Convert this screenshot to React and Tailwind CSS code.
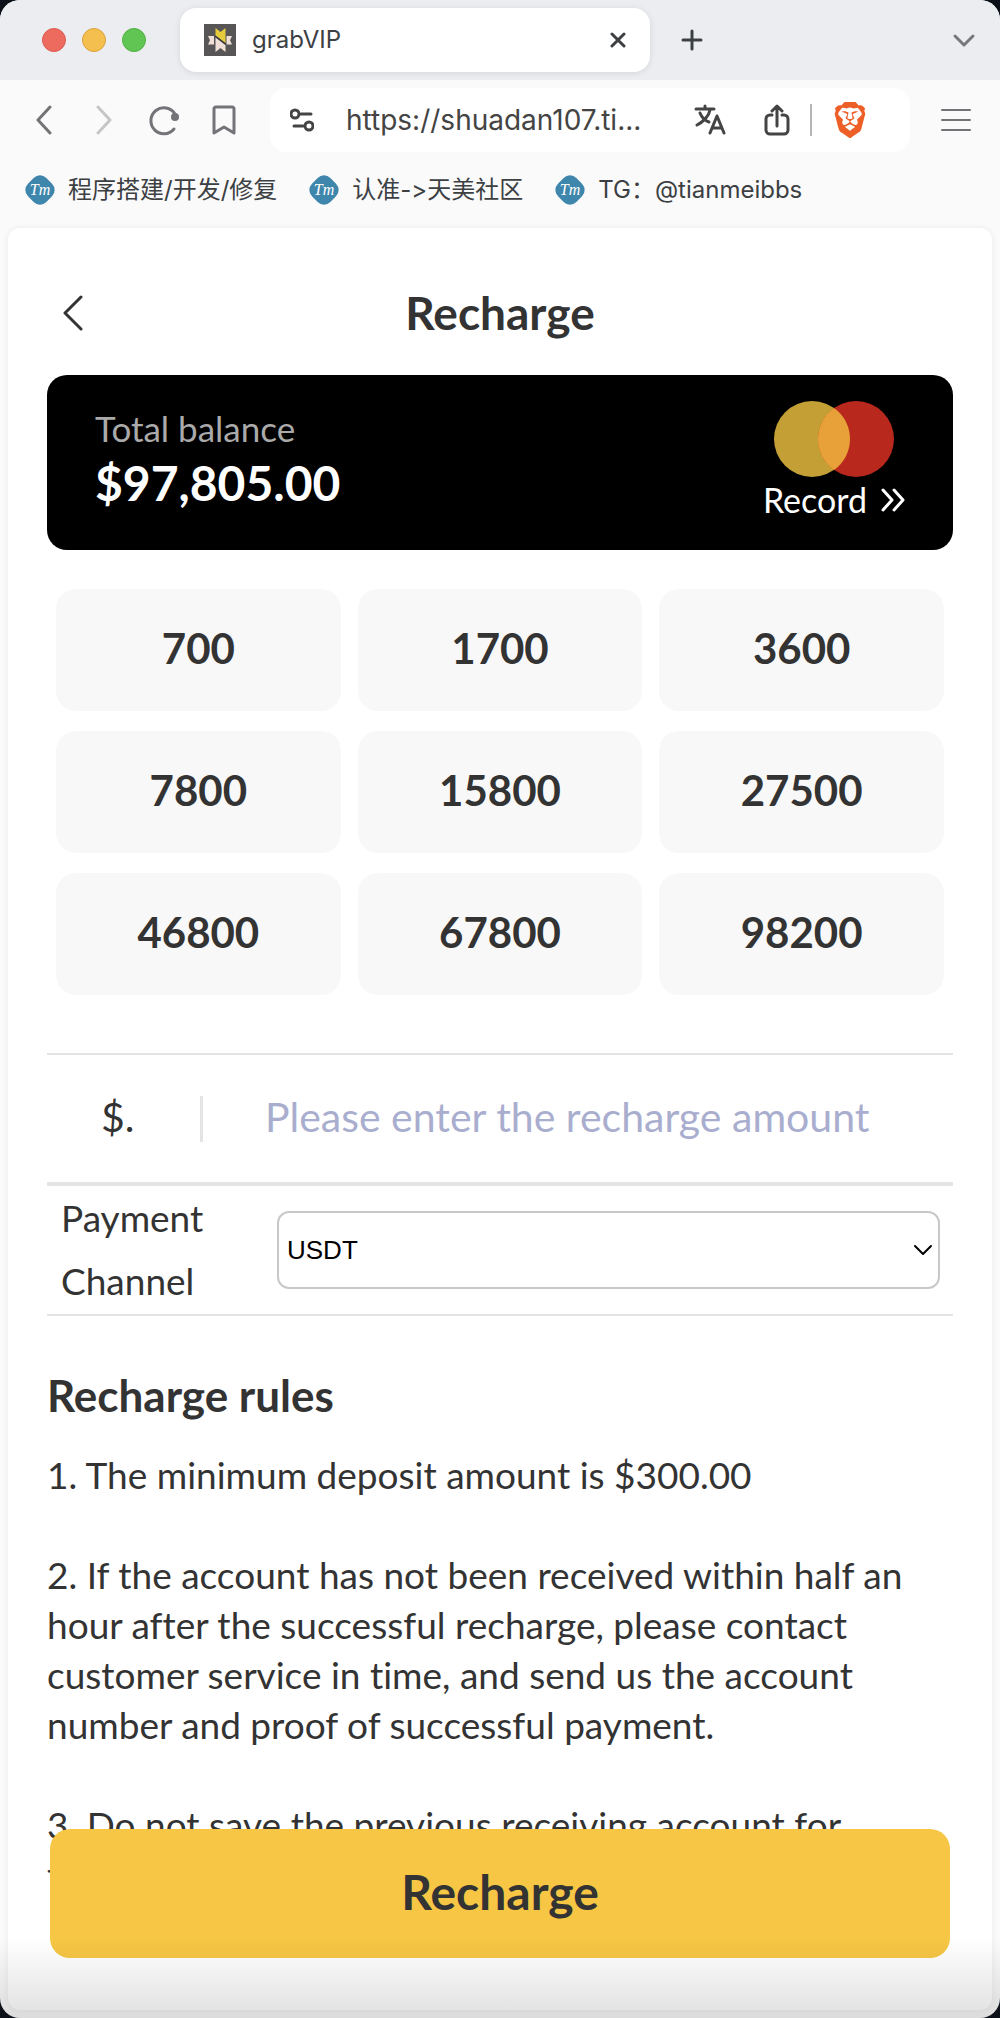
import React from "react";
import { SiBrave } from "react-icons/si";

const AMOUNTS = [700, 1700, 3600, 7800, 15800, 27500, 46800, 67800, 98200];

const BOOKMARKS = ["程序搭建/开发/修复", "认准->天美社区", "TG：@tianmeibbs"];

function Stroke({ w, h, className = "", width = 3, children }) {
  return (
    <svg
      width={w}
      height={h}
      viewBox={`0 0 ${w} ${h}`}
      className={`shrink-0 ${className}`}
      fill="none"
      stroke="currentColor"
      strokeWidth={width}
      strokeLinecap="round"
      strokeLinejoin="round"
      aria-hidden="true"
    >
      {children}
    </svg>
  );
}

function Favicon() {
  return (
    <svg width="32" height="32" viewBox="0 0 32 32" className="shrink-0" aria-hidden="true">
      <rect width="32" height="32" fill="#575556" />
      <path d="M4 12h6v8.500H4l2-4.250z" fill="#f0dfd6" />
      <path d="M28 12h-5.500v8.500H28l-2-4.250z" fill="#f0dfd6" />
      <path d="M11.500 4l5 4 5-4v15l-10-7.500z" fill="#e6cb3c" />
      <path d="M11.500 13.500l10 7.500v7l-5-4-5 4z" fill="#f0dfd6" />
      <path d="M11 12l11 8.500" stroke="#3d3b3c" strokeWidth="1.500" />
    </svg>
  );
}

function TabStrip() {
  return (
    <div className="flex h-20 shrink-0 items-center bg-[#ecedf1] pr-6 pl-[42px] text-[#3c4043]">
      <div className="flex gap-4">
        <button aria-label="Close window" className="size-6 rounded-full border border-[#dc5a50] bg-[#ec6a5e]" />
        <button aria-label="Minimize window" className="size-6 rounded-full border border-[#dba23c] bg-[#f4bf4f]" />
        <button aria-label="Maximize window" className="size-6 rounded-full border border-[#52b043] bg-[#61c554]" />
      </div>
      <div className="ml-[34px] flex h-16 w-[470px] items-center rounded-2xl bg-white px-6 shadow-[0_1px_6px_rgba(0,0,0,0.1)]">
        <Favicon />
        <span className="ml-4 text-2xl">grabVIP</span>
        <button aria-label="Close tab" className="ml-auto">
          <Stroke w={16} h={16}>
            <path d="M2 2l12 12M14 2L2 14" />
          </Stroke>
        </button>
      </div>
      <button aria-label="New tab" className="ml-[31px]">
        <Stroke w={22} h={22}>
          <path d="M11 2v18M2 11h18" />
        </Stroke>
      </button>
      <button aria-label="Search tabs" className="ml-auto text-[#77777c]">
        <Stroke w={24} h={16} width={3}>
          <path d="M3 4l9 9 9-9" />
        </Stroke>
      </button>
    </div>
  );
}

function Toolbar() {
  return (
    <div className="flex h-20 shrink-0 items-center pr-[29px] pl-9 text-[#737378]">
      <button aria-label="Back">
        <Stroke w={16} h={30}>
          <path d="M14 2L2 15l12 13" />
        </Stroke>
      </button>
      <button aria-label="Forward" className="ml-11 text-[#c6c6c8]">
        <Stroke w={16} h={30}>
          <path d="M2 2l12 13L2 28" />
        </Stroke>
      </button>
      <button aria-label="Reload" className="ml-9">
        <Stroke w={32} h={32}>
          <path d="M26 25A13 13 0 1 1 27 10" />
          <circle cx="27" cy="13" r="4" fill="currentColor" stroke="none" />
        </Stroke>
      </button>
      <button aria-label="Bookmark this page" className="ml-8">
        <Stroke w={24} h={32}>
          <path d="M2 29V5a2 2 0 0 1 2-2h16a2 2 0 0 1 2 2v24l-10-6z" />
        </Stroke>
      </button>
      <div className="ml-[34px] flex h-16 min-w-0 flex-1 items-center rounded-2xl bg-white pr-[42px] pl-5 text-[#444]">
        <Stroke w={24} h={24}>
          <circle cx="5" cy="6" r="4" />
          <path d="M11 6h10M4 18h9" />
          <circle cx="19" cy="18" r="4" />
        </Stroke>
        <span className="ml-8 truncate text-[28px]">https://shuadan107.ti...</span>
        <button aria-label="Translate" className="ml-auto">
          <Stroke w={32} h={32}>
            <path d="M2 5h18M11 2v3M16 6c-1 6-7 12-13 15M6 9c2 5 6 8 9 9" />
            <path d="M16 29l7-17 7 17M18 24h10" />
          </Stroke>
        </button>
        <button aria-label="Share" className="ml-[38px]">
          <Stroke w={26} h={32}>
            <path d="M8 11H6a4 4 0 0 0-4 4v11a4 4 0 0 0 4 4h14a4 4 0 0 0 4-4V15a4 4 0 0 0-4-4h-2M13 22V3M8 7l5-5 5 5" />
          </Stroke>
        </button>
        <span className="ml-5 h-8 w-[2px] bg-[#b5b5b8]" />
        <button aria-label="Shields" className="ml-5 text-[#ee5f28]">
          <SiBrave size={36} />
        </button>
      </div>
      <button aria-label="Menu" className="ml-[31px]">
        <Stroke w={30} h={24} width={2}>
          <path d="M1 2h28M1 12h28M1 22h28" />
        </Stroke>
      </button>
    </div>
  );
}

function Bookmarks() {
  return (
    <nav className="flex h-[68px] shrink-0 items-center gap-8 pb-2 pl-[25px] text-2xl text-[#3c4043]">
      {BOOKMARKS.map((label) => (
        <a key={label} href="#" className="flex items-center gap-[13px] whitespace-nowrap">
          <svg width="30" height="30" viewBox="0 0 30 30" aria-hidden="true">
            <rect x="2" y="2" width="26" height="26" rx="9" fill="#3f86ad" transform="rotate(45 15 15)" />
            <text x="15" y="20" textAnchor="middle" fill="#fff" fontSize="16" fontStyle="italic" fontFamily="Liberation Serif, serif">
              Tm
            </text>
          </svg>
          {label}
        </a>
      ))}
    </nav>
  );
}

function BalanceCard() {
  return (
    <section className="flex h-[175px] items-start justify-between rounded-[20px] bg-black px-12 pt-[26px]">
      <div>
        <p className="text-[35px] leading-[54px] text-[#aaa]">Total balance</p>
        <p className="text-[48px] leading-[56px] font-bold text-white">$97,805.00</p>
      </div>
      <div className="flex flex-col items-center">
        <svg width="120" height="76" viewBox="0 0 120 76" aria-hidden="true">
          <circle cx="38" cy="38" r="38" fill="#c49f35" />
          <circle cx="82" cy="38" r="38" fill="#b9281c" />
          <path d="M60 7a38 38 0 0 1 0 62a38 38 0 0 1 0-62z" fill="#e7a138" />
        </svg>
        <a href="#" className="flex items-center gap-[14px] text-[34px] leading-[46px] text-white">
          Record
          <Stroke w={24} h={24} width={3}>
            <path d="M2 2l9 10-9 10M13 2l9 10-9 10" />
          </Stroke>
        </a>
      </div>
    </section>
  );
}

export default function App() {
  return (
    <div className="h-screen bg-[#0c1119] font-['Inter','Noto_Sans_CJK_SC',sans-serif] [font-variant-ligatures:none]">
      <div className="relative flex h-full flex-col overflow-hidden rounded-[20px] bg-[#fafafa]">
        <TabStrip />
        <Toolbar />
        <Bookmarks />
        <main className="relative mx-2 mb-2 flex-1 overflow-hidden rounded-xl bg-white px-[39px] font-['Lato',sans-serif] text-[#333] shadow-[0_0_6px_rgba(0,0,0,0.07)]">
          <header className="grid h-[147px] grid-cols-[1fr_auto_1fr] items-center pt-[22px] pl-4">
            <button aria-label="Go back" className="justify-self-start">
              <Stroke w={20} h={36} width={3}>
                <path d="M18 2L2 18l16 16" />
              </Stroke>
            </button>
            <h1 className="pr-4 text-[46px] font-bold">Recharge</h1>
          </header>

          <BalanceCard />

          <div className="mt-[39px] grid grid-cols-3 gap-x-[17px] gap-y-5 px-[9px]">
            {AMOUNTS.map((amount) => (
              <button key={amount} className="h-[122px] rounded-[20px] bg-[#f8f8f8] pb-1 text-[42px] font-bold">
                {amount}
              </button>
            ))}
          </div>

          <div className="mt-[58px] flex h-[133px] items-center border-t-2 border-b-4 border-[#e4e4e4]">
            <label htmlFor="amount" className="w-[153px] pb-1 pl-[54px] text-[41px]">
              $.
            </label>
            <span className="h-[46px] w-[3px] bg-[#e4e4e4]" />
            <input
              id="amount"
              type="text"
              placeholder="Please enter the recharge amount"
              className="ml-[62px] min-w-0 flex-1 pb-1 text-[41px] outline-none placeholder:text-[#a9aecf]"
            />
          </div>

          <div className="flex h-[130px] items-center border-b-2 border-[#e4e4e4] pr-[13px] pl-[14px]">
            <label htmlFor="channel" className="w-[216px] pr-12 pb-[2px] text-[37px] leading-[63px]">
              Payment Channel
            </label>
            <div className="relative flex-1">
              <select
                id="channel"
                className="h-[78px] w-full appearance-none rounded-xl border-2 border-[#c8c8c8] bg-white px-2 font-['Liberation_Sans',sans-serif] text-[26px] text-black"
              >
                <option>USDT</option>
              </select>
              <Stroke w={20} h={14} width={2} className="pointer-events-none absolute top-8 right-[7px] text-black">
                <path d="M2 3l8 8 8-8" />
              </Stroke>
            </div>
          </div>

          <section className="pt-12">
            <h2 className="text-[44px] leading-[62px] font-bold">Recharge rules</h2>
            <div className="mt-6 flex flex-col gap-[50px] text-[37px] leading-[50px]">
              <p>1. The minimum deposit amount is $300.00</p>
              <p>
                2. If the account has not been received within half an
                <br />
                hour after the successful recharge, please contact
                <br />
                customer service in time, and send us the account
                <br />
                number and proof of successful payment.
              </p>
              <p>
                3. Do not save the previous receiving account for
                <br />
                transfer
              </p>
            </div>
          </section>

          <button className="absolute inset-x-[42px] bottom-[52px] h-[129px] rounded-[20px] bg-[#f6c644] pb-1 text-[48px] font-bold">
            Recharge
          </button>
        </main>
        <div className="pointer-events-none absolute inset-x-0 bottom-0 h-20 bg-linear-to-b from-transparent to-black/12" />
      </div>
    </div>
  );
}
